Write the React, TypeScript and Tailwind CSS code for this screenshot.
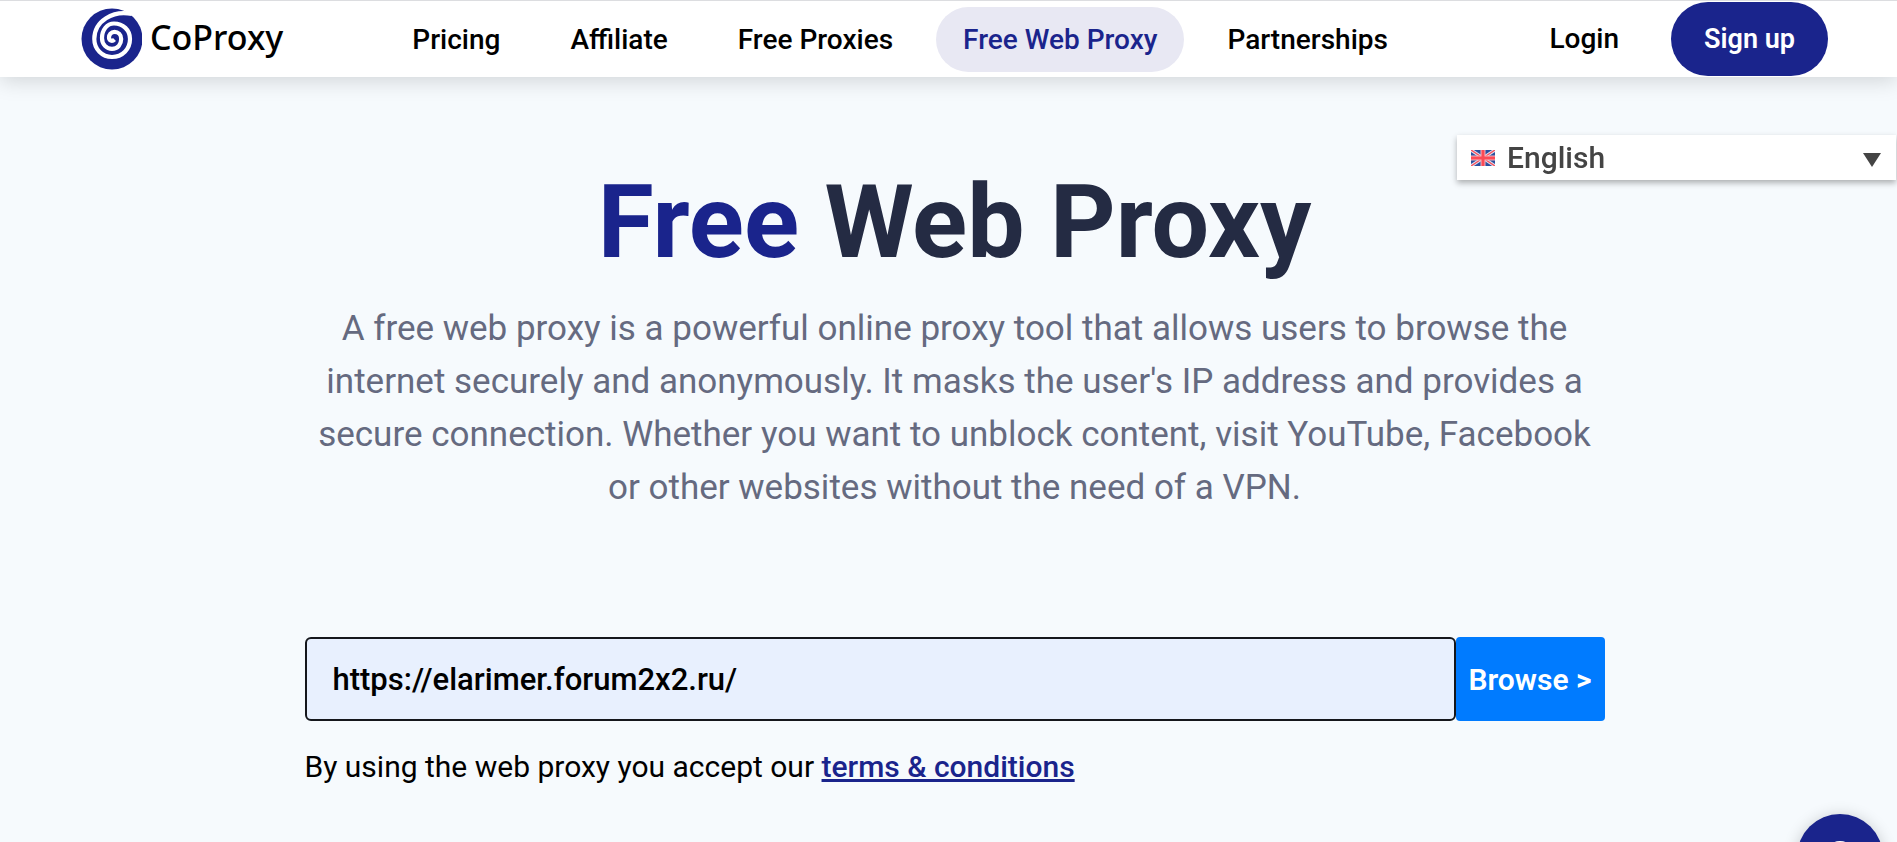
import { useState } from "react"

const navItems = [
  { label: "Pricing", href: "#pricing" },
  { label: "Affiliate", href: "#affiliate" },
  { label: "Free Proxies", href: "#free-proxies" },
  { label: "Free Web Proxy", href: "#free-web-proxy", active: true },
  { label: "Partnerships", href: "#partnerships" },
]

function Logo() {
  return (
    <a href="#home" className="flex items-center gap-2">
      <svg viewBox="0 0 62 62" className="size-[62px]" aria-hidden="true">
        <circle cx="32" cy="31" r="30.5" fill="#1a248c" />
        <path
          d="M52 6 C33 2 14.3 13 14.3 31 C14.3 41 22 49 32 49 C42.5 49 50 41 50 31 C50 22 43 15.5 34 15.5 C27 15.5 22 22 22 30 C22 36.5 26.5 40.8 32 40.8 C38 40.8 41.2 36 41.2 31 C41.2 26.5 38 23.8 34.5 23.8 C31 23.8 29 27 29 29.5 C29 32.5 32 34 34.5 31.5"
          fill="none"
          stroke="#fff"
          strokeWidth="4.2"
        />
      </svg>
      <span className="pb-1 font-['Noto_Sans'] text-[34px] font-medium text-black">CoProxy</span>
    </a>
  )
}

function Header() {
  return (
    <header className="relative flex h-[77px] items-center border-t border-[#dcdde0] bg-white pl-20 pr-[69px] shadow-[0_4px_20px_rgba(0,0,0,0.15)]">
      <Logo />
      <nav className="ml-[102px] flex items-center gap-4">
        {navItems.map((item) => (
          <a
            key={item.label}
            href={item.href}
            className={
              item.active
                ? "rounded-full bg-[#e8e8f3] px-[27px] pt-[17px] pb-4 text-[28px] leading-8 font-medium text-[#1a248c]"
                : "px-[27px] pt-[17px] pb-4 text-[28px] leading-8 font-medium text-black"
            }
          >
            {item.label}
          </a>
        ))}
      </nav>
      <div className="ml-auto flex items-center gap-[52px]">
        <a href="#login" className="text-[28px] leading-8 font-medium text-black">
          Login
        </a>
        <a href="#signup" className="rounded-full bg-[#1a248c] px-[33px] py-[21px] text-[27px] leading-8 font-semibold text-white">
          Sign up
        </a>
      </div>
    </header>
  )
}

function UkFlag() {
  return (
    <svg viewBox="0 0 24 16" className="h-4 w-6 shrink-0" aria-hidden="true">
      <rect width="24" height="16" fill="#2a4f9e" />
      <path d="M0 0 L24 16 M24 0 L0 16" stroke="#dfe3f2" strokeWidth="3.2" />
      <path d="M0 0 L24 16 M24 0 L0 16" stroke="#f8505c" strokeWidth="1.4" />
      <path d="M12 0 V16 M0 8 H24" stroke="#f3b5c0" strokeWidth="5" />
      <path d="M12 0 V16 M0 8 H24" stroke="#fb4a55" strokeWidth="3" />
    </svg>
  )
}

function LanguagePicker() {
  const [lang, setLang] = useState("en")

  return (
    <div className="fixed top-[135px] right-px flex h-[45px] w-[439px] items-center bg-white pl-3.5 text-[#444] shadow-[0_3px_6px_rgba(0,0,0,0.3)]">
      <UkFlag />
      <select
        aria-label="Language"
        className="h-full flex-1 appearance-none bg-transparent pl-3 text-[30px] leading-9 font-medium outline-none"
        value={lang}
        onChange={(e) => setLang(e.target.value)}
      >
        <option value="en">English</option>
      </select>
      <svg viewBox="0 0 18 14" className="pointer-events-none absolute top-[18px] right-[15px] h-3.5 w-[18px]" aria-hidden="true">
        <path d="M0 0 H18 L9 14 Z" fill="#444" />
      </svg>
    </div>
  )
}

function ChatButton() {
  return (
    <button
      type="button"
      aria-label="Open chat"
      className="fixed right-3.5 -bottom-[58px] flex size-[86px] items-center justify-center rounded-full bg-[#1a248c] shadow-[0_2px_16px_rgba(0,0,0,0.2)]"
    >
      <svg viewBox="0 0 36 36" className="size-9" aria-hidden="true">
        <circle cx="18" cy="18" r="14" fill="none" stroke="#fff" strokeWidth="4" />
      </svg>
    </button>
  )
}

export default function App() {
  const [url, setUrl] = useState("https://elarimer.forum2x2.ru/")

  return (
    <div className="h-screen overflow-hidden bg-[#f6fafd] font-[Roboto,sans-serif]">
      <Header />
      <div className="pl-3">
        <main className="mx-auto w-full max-w-[1300px] pt-[85px]">
          <h1 className="text-center text-[102px] leading-[120px] font-bold text-[#242b43]">
            <span className="text-[#1a248c]">Free</span> Web Proxy
          </h1>
          <p className="mt-5 px-3 text-center text-[35px] leading-[53px] text-[#656a80]">
            A free web proxy is a powerful online proxy tool that allows users to browse the internet securely and
            anonymously. It masks the user's IP address and provides a secure connection. Whether you want to unblock
            content, visit YouTube, Facebook or other websites without the need of a VPN.
          </p>
          <form className="mt-[123px] flex" onSubmit={(e) => e.preventDefault()}>
            <input
              aria-label="Website address"
              className="h-[84px] min-w-0 flex-1 rounded-md border-2 border-[#15171c] bg-[#e8f0fe] px-[26px] text-[31px] font-medium text-black outline-none"
              value={url}
              onChange={(e) => setUrl(e.target.value)}
            />
            <button type="submit" className="w-[149px] rounded bg-[#007bff] text-[30px] font-semibold text-white">
              Browse &gt;
            </button>
          </form>
          <p className="mt-7 text-[30px] leading-9 text-black">
            By using the web proxy you accept our{" "}
            <a href="#terms" className="font-medium text-[#1a248c] underline">
              terms &amp; conditions
            </a>
          </p>
        </main>
      </div>
      <LanguagePicker />
      <ChatButton />
    </div>
  )
}
